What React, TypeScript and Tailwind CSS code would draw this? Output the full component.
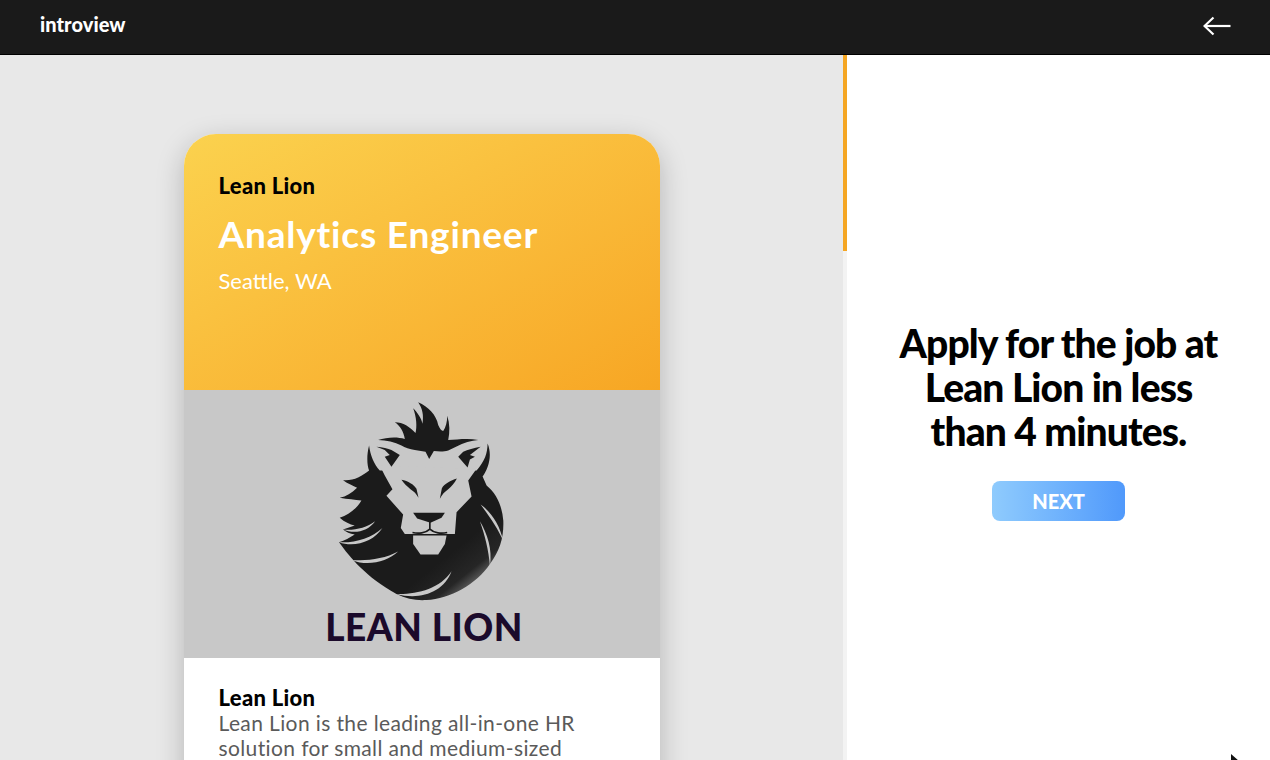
import React from "react";

function LionLogo() {
  const ink = "#1b1b1b";
  const bg = "#c8c8c8";
  return (
    <svg viewBox="100 20 530 620" className="block h-[207px] w-[177px]" aria-label="lion logo">
      <defs>
        <linearGradient id="mane" gradientUnits="userSpaceOnUse" x1="400" y1="530" x2="480" y2="630">
          <stop offset="0" stopColor={ink} />
          <stop offset="0.6" stopColor="#262626" />
          <stop offset="1" stopColor="#6e6e6e" />
        </linearGradient>
      </defs>
      {/* Mane */}
      <path
        fill="url(#mane)"
        d="M208 165 C200 195 202 225 208 240 C185 258 160 272 130 269 C145 280 160 285 172 292 C155 308 140 318 120 322 C145 326 165 328 185 330 C170 355 148 372 120 382 C135 395 150 402 165 405 L130 417 C140 425 150 430 165 432 C150 442 135 450 118 455 C150 500 200 560 290 610 C320 625 350 630 380 628 C450 625 530 580 570 520 C600 480 612 440 610 390 C606 345 590 310 560 285 L548 258 C565 235 578 195 563 159 C562 190 555 210 530 240 L240 240 C222 220 212 195 208 165 Z"
      />
      {/* Forelock */}
      <path
        fill={ink}
        d="M235 149 C260 141 290 138 315 146 C312 125 300 105 285 96 C310 96 330 110 347 128 C352 110 350 80 340 54 C352 65 365 85 368 100 C372 75 368 55 355 36 C385 48 410 75 415 104 C420 115 425 122 430 122 C438 110 442 95 442 76 C450 100 450 125 445 149 C470 148 505 143 535 149 C515 150 490 158 470 168 L445 180 C430 185 415 183 402 182 L388 206 L377 184 L345 179 C330 175 315 172 305 165 C285 155 260 150 235 149 Z"
      />
      {/* Face and chin */}
      <path fill={bg} d="M240 225 L255 255 L278 296 L260 316 L310 372 L303 412 L315 430 L465 430 L470 365 L515 318 L505 270 L530 235 Z" />
      <path fill={bg} d="M340 435 H440 L435 460 L415 492 H362 L340 460 Z" />
      {/* Ear interiors */}
      <path fill={ink} d="M230 169 C248 170 265 174 275 179 L300 194 L275 229 L255 199 L270 194 L255 179 Z" />
      <path fill={ink} d="M542 169 C522 172 503 178 490 184 L475 199 L503 231 L510 207 L525 199 L510 194 Z" />
      {/* Eyes */}
      <path fill={ink} d="M305 268 C325 272 342 282 350 295 L356 322 C350 310 342 302 332 296 C322 288 313 280 305 268 Z" />
      <path fill={ink} d="M471 264 C452 270 434 280 426 293 L420 325 C426 312 435 303 445 296 C455 288 464 278 471 264 Z" />
      {/* Nose and mouth */}
      <path fill={ink} d="M340 367 H435 L425 382 L392 397 L352 384 Z" />
      <path fill="none" stroke={ink} strokeWidth="5" d="M390 394 V416 C378 428 355 430 338 426 M390 416 C402 428 425 430 442 426" />
      {/* Mane highlights */}
      <g fill={bg}>
        <path d="M542 342 C575 365 600 405 610 452 C595 415 570 380 542 342 Z" />
        <path d="M540 392 C562 430 578 475 570 526 C566 478 555 435 540 392 Z" />
        <path d="M130 417 C165 420 200 412 226 392 C205 422 165 432 130 417 Z" />
        <path d="M118 455 C165 458 215 442 248 412 C222 452 165 472 118 455 Z" />
        <path d="M158 508 C200 512 255 505 295 483 C262 515 200 528 158 508 Z" />
        <path d="M290 610 C350 612 420 595 455 542 C432 605 360 630 290 610 Z" />
      </g>
    </svg>
  );
}

export default function App() {
  return (
    <div className="relative flex h-[760px] w-[1270px] flex-col overflow-hidden bg-white font-['Lato',sans-serif]">
      <header className="flex h-[55px] shrink-0 items-center justify-between border-b border-black bg-[#1a1a1a] pl-10 pr-10">
        <span className="-mt-[6px] text-[20px] font-black leading-none tracking-[0.05px] text-white">introview</span>
        <svg width="28" height="20" viewBox="0 0 28 20" fill="none" stroke="white" strokeWidth="2.2" className="-mr-[1px] mt-[-3px]" aria-label="back">
          <path d="M1.5 10 H27.5" />
          <path d="M10.5 1.5 L1.5 10 L10.5 18.5" />
        </svg>
      </header>
      <div className="flex min-h-0 flex-1">
        <main className="flex w-[843px] shrink-0 justify-center overflow-hidden bg-[#e8e8e8] pt-[79px]">
          <article className="h-[700px] w-[476px] shrink-0 overflow-hidden rounded-t-[32px] bg-white shadow-[0_8px_28px_rgba(0,0,0,0.22)]">
            <div className="h-[256px] bg-gradient-to-br from-[#fbd24e] to-[#f7a623] px-[35px] pt-[39px]">
              <div className="text-[22px] font-black leading-[26px] tracking-[0.3px] text-black">Lean Lion</div>
              <div className="mt-[12px] text-[37px] font-bold leading-[46px] tracking-[0.8px] text-white">Analytics Engineer</div>
              <div className="mt-[10px] text-[22px] leading-[28px] text-white">Seattle, WA</div>
            </div>
            <div className="flex h-[268px] flex-col items-center bg-[#c8c8c8] pt-[7px]">
              <LionLogo />
              <div className="ml-[5px] mt-[1px] text-[37px] font-black leading-[44px] tracking-[0.5px] text-[#1b0a2b]">LEAN LION</div>
            </div>
            <div className="px-[35px] pt-[27px]">
              <div className="text-[22px] font-black leading-[25px] tracking-[0.3px] text-black">Lean Lion</div>
              <p className="text-[21px] leading-[25px] tracking-[0.38px] text-[#5a5a5a]">
                Lean Lion is the leading all-in-one HR solution for small and medium-sized
              </p>
            </div>
          </article>
        </main>
        <div className="flex w-[4px] shrink-0 flex-col bg-[#f3f3f3]">
          <div className="h-[196px] bg-[#f5a623]" />
        </div>
        <section className="flex flex-1 flex-col items-center pt-[266px]">
          <h1 className="w-[330px] text-center text-[39px] font-black leading-[44px] tracking-[-0.9px] text-black">
            Apply for the job at Lean Lion in less than 4 minutes.
          </h1>
          <button className="mt-[28px] h-[40px] w-[133px] rounded-[8px] bg-gradient-to-r from-[#8fcbfd] to-[#5099fb] text-[20px] font-black leading-none text-white">
            NEXT
          </button>
        </section>
      </div>
      <svg className="absolute left-[1230px] top-[753px]" width="12" height="10" viewBox="0 0 12 10" aria-hidden="true">
        <path d="M1 1 L9 8 L5 8 L5 10 L1 10 Z" fill="#111" />
      </svg>
    </div>
  );
}
